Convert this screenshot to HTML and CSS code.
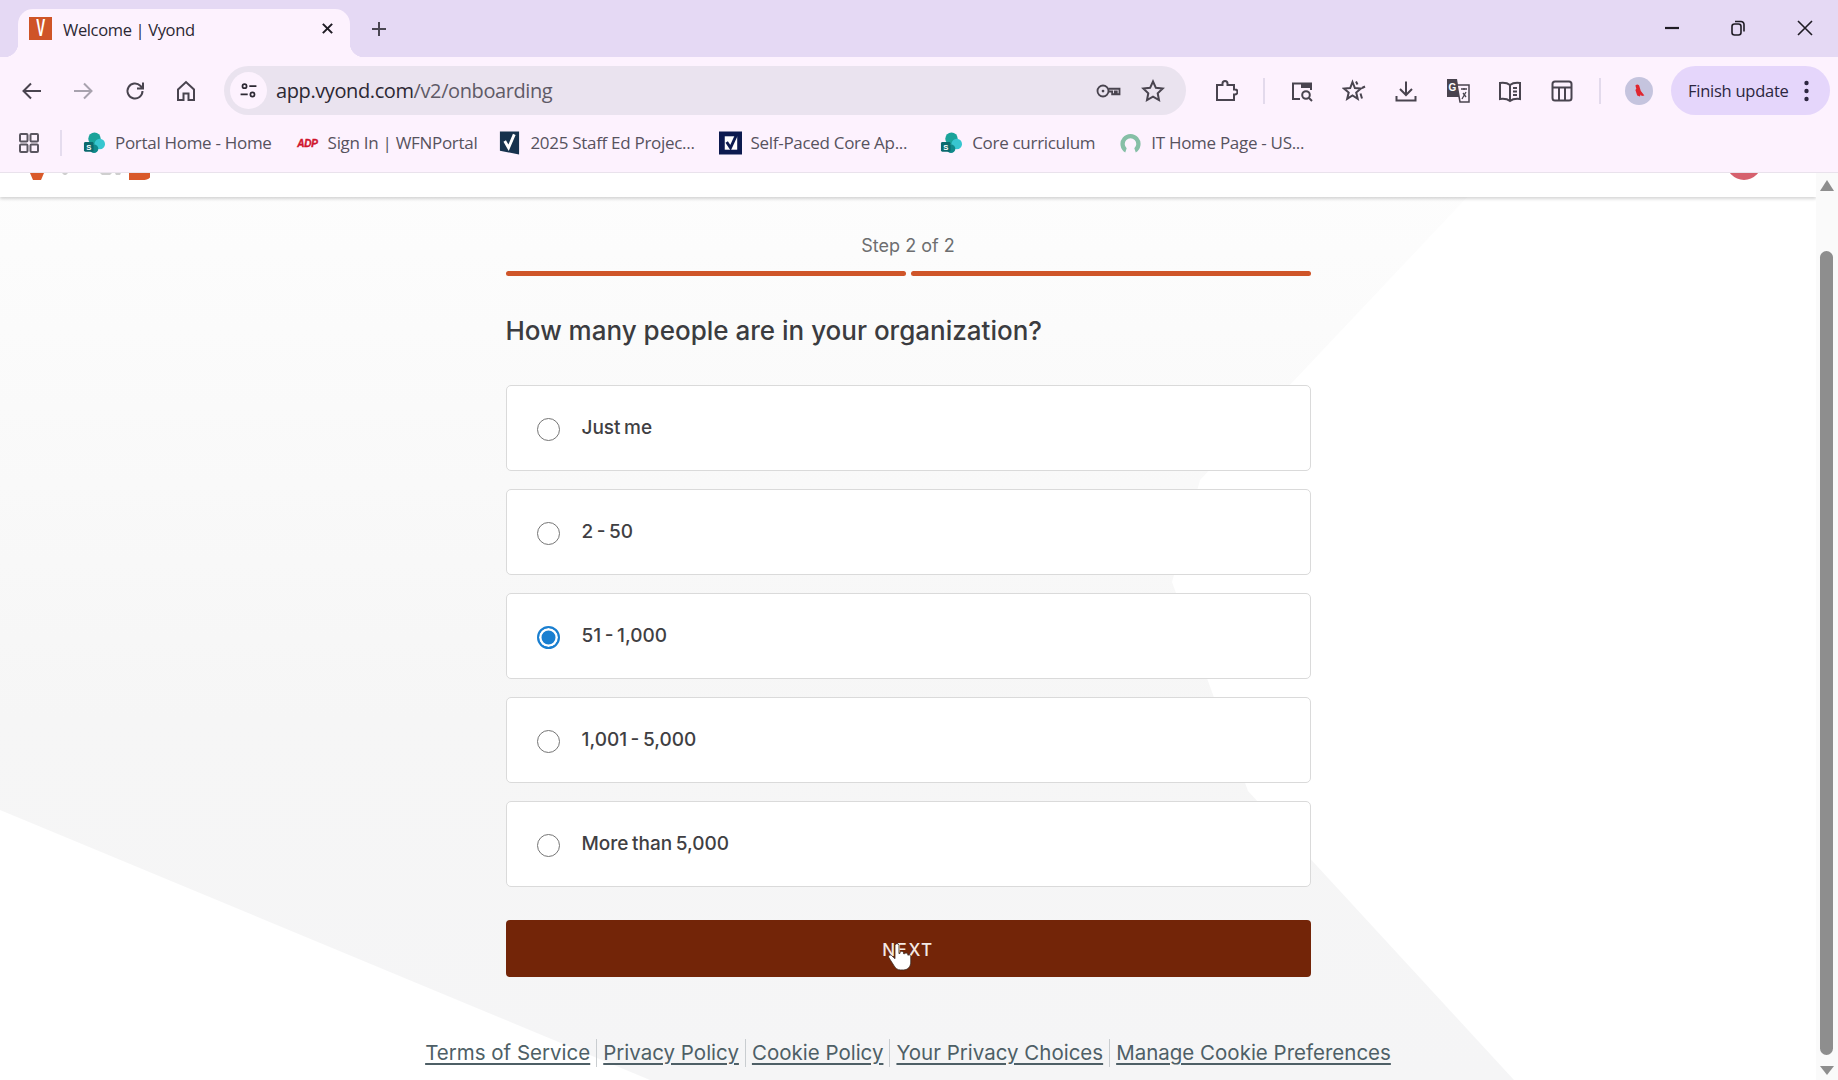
FILE: index.html
```html
<!DOCTYPE html>
<html lang="en">
<head>
<meta charset="utf-8">
<title>Welcome | Vyond</title>
<link rel="stylesheet" href="styles.css">
</head>
<body>
<div class="tabstrip">
  <div class="tab">
    <span class="favicon"><span class="favicon-v">V</span></span>
    <span class="tab-title">Welcome | Vyond</span>
    <svg class="tab-close" viewBox="0 0 14 14"><path d="M2 2l10 10M12 2L2 12"/></svg>
  </div>
  <svg class="newtab" viewBox="0 0 16 16"><path d="M8 1v14M1 8h14"/></svg>
  <div class="winctl">
    <div class="winbtn"><svg class="min" viewBox="0 0 16 16"><path d="M1 8h14"/></svg></div>
    <div class="winbtn"><svg viewBox="0 0 16 16"><rect x="2" y="4" width="9" height="11" rx="2.5"/><path d="M5 1.500h6a3 3 0 0 1 3 3v7"/></svg></div>
    <div class="winbtn"><svg viewBox="0 0 16 16"><path d="M1 1l14 14M15 1L1 15"/></svg></div>
  </div>
</div>

<div class="toolbar">
  <div class="navbtn nav"><svg viewBox="0 0 24 24"><path d="M21 12H4M11 4.500L3.500 12l7.500 7.500"/></svg></div>
  <div class="navbtn nav dim"><svg viewBox="0 0 24 24"><path d="M3 12h17M13 4.500l7.500 7.500-7.500 7.500"/></svg></div>
  <div class="navbtn nav"><svg viewBox="0 0 24 24"><path d="M19.500 12a7.500 7.500 0 1 1-2.200-5.300L20 9.500M20 3.500v6h-6"/></svg></div>
  <div class="navbtn nav"><svg viewBox="0 0 24 24"><path d="M4 10.500L12 3l8 7.500V21h-5.500v-6.500h-5V21H4z"/></svg></div>
  <div class="omnibox">
    <span class="site-icon"><svg viewBox="0 0 24 24"><circle cx="7" cy="6.500" r="2.600"/><path d="M13 6.500h9M2 17h9"/><circle cx="17" cy="17" r="2.600"/></svg></span>
    <span class="url">app.vyond.com<span class="url-path">/v2/onboarding</span></span>
    <svg class="omni-icon key" viewBox="0 0 28 24"><circle cx="8" cy="12" r="6"/><circle cx="8" cy="12" r="1.500" class="solid"/><path d="M14 9.500h12v6h-3v-3h-2v3h-3v-3h-4"/></svg>
    <svg class="omni-icon star" viewBox="0 0 24 24"><path d="M12 2.500l2.900 6.300 6.800.8-5 4.700 1.300 6.800-6-3.400-6 3.400 1.300-6.800-5-4.700 6.800-.8z"/></svg>
  </div>
  <div class="navbtn ext"><svg viewBox="0 0 24 24"><path d="M3 6h5.500V4.500a2.500 2.500 0 0 1 5 0V6H20v4.500h1a2.500 2.500 0 0 1 0 5h-1V21H3z"/></svg></div>
  <span class="tb-sep first"></span>
  <div class="navbtn"><svg viewBox="0 0 24 24"><path d="M10 20H3V4.500h18V11"/><path class="solid" d="M11 4h10v5H11z"/><circle cx="16" cy="16" r="3.800"/><path d="M19 19l3 3"/></svg></div>
  <div class="navbtn"><svg viewBox="0 0 24 24"><path d="M10.500 3l2.400 6 6 .6-4.700 4 1.500 6.200-5.200-3.400-5.300 3.400 1.500-6.200-4.700-4 6.200-.6z"/><path d="M14 2.500l1.500 3M20 9l3-1.500M18.500 14.500l1.500 5"/></svg></div>
  <div class="navbtn"><svg viewBox="0 0 24 24"><path d="M12 2.500v13M6 10l6 6 6-6M2.500 17v4.500h19V17"/></svg></div>
  <div class="navbtn"><svg viewBox="0 0 24 24"><path class="solid" d="M1 0h10l3 18H1z"/><text x="6.500" y="12" class="gt">G</text><path class="paper" d="M11 6h12v17H14z"/><path class="thin" d="M15 10h6M18 9v2M16 20l4-7M20 18l-3-4"/></svg></div>
  <div class="navbtn"><svg viewBox="0 0 24 24"><path d="M12 6C9.500 4 6 3.500 2 4v16c4-.5 7.500 0 10 2 2.500-2 6-2.500 10-2V4c-4-.5-7.500 0-10 2zM12 6v16M15 9h4M15 12.500h4M15 16h4"/></svg></div>
  <div class="navbtn"><svg viewBox="0 0 24 24"><rect x="2.500" y="2.500" width="19" height="19" rx="2.500"/><path d="M2.500 8.500h19M9 8.500v13M15 8.500v13"/></svg></div>
  <span class="tb-sep second"></span>
  <span class="avatar"><svg viewBox="0 0 20 20"><path d="M6 4c2-2 4-1 4.500 1l1.500 5 4 5-3 .5-1-1.500-1 2-3-1-2-6 1-1.500z"/></svg></span>
  <div class="update-pill">
    <span class="update-text">Finish update</span>
    <svg class="kebab" viewBox="0 0 6 22"><circle cx="3" cy="3" r="2.200"/><circle cx="3" cy="11" r="2.200"/><circle cx="3" cy="19" r="2.200"/></svg>
  </div>
</div>

<div class="bookmarks">
  <svg class="apps" viewBox="0 0 20 20"><rect x="1" y="1" width="7.500" height="7.500" rx="1"/><rect x="11.500" y="1" width="7.500" height="7.500" rx="1"/><rect x="1" y="11.500" width="7.500" height="7.500" rx="1"/><rect x="11.500" y="11.500" width="7.500" height="7.500" rx="1"/></svg>
  <span class="bm-sep"></span>
  <div class="bm">
    <svg class="bm-icon" viewBox="0 0 24 24"><circle cx="12" cy="7.500" r="6.500" fill="#1aa39a"/><circle cx="17.500" cy="13" r="5.500" fill="#37c6d0"/><circle cx="11.500" cy="18" r="4.500" fill="#0f8a8a"/><rect x="1" y="11" width="10" height="10" rx="1.500" fill="#0b6a6e"/><text x="6" y="19" class="bm-s">S</text></svg>
    <span>Portal Home - Home</span>
  </div>
  <div class="bm tight">
    <svg class="bm-icon" viewBox="0 0 24 24"><text x="12" y="16.500" class="bm-adp">ADP</text></svg>
    <span>Sign In | WFNPortal</span>
  </div>
  <div class="bm">
    <svg class="bm-icon" viewBox="0 0 24 24"><path d="M2 0h20v24L2 20z" fill="#16324d"/><path d="M7 10l4 7 6-14" class="bm-check"/></svg>
    <span>2025 Staff Ed Projec...</span>
  </div>
  <div class="bm wide">
    <svg class="bm-icon" viewBox="0 0 24 24"><rect width="24" height="24" fill="#0c1a4f"/><path d="M6 5h13v14H6z" fill="#fff"/><path d="M8 11l4 6 6-13" class="bm-check navy"/></svg>
    <span>Self-Paced Core Ap...</span>
  </div>
  <div class="bm">
    <svg class="bm-icon" viewBox="0 0 24 24"><circle cx="12" cy="7.500" r="6.500" fill="#1aa39a"/><circle cx="17.500" cy="13" r="5.500" fill="#37c6d0"/><circle cx="11.500" cy="18" r="4.500" fill="#0f8a8a"/><rect x="1" y="11" width="10" height="10" rx="1.500" fill="#0b6a6e"/><text x="6" y="19" class="bm-s">S</text></svg>
    <span>Core curriculum</span>
  </div>
  <div class="bm">
    <svg class="bm-icon" viewBox="0 0 24 24"><path d="M6.500 22a10.500 10.500 0 1 1 11 0l-1.500-4.500a6 6 0 1 0-8 0z" fill="#86bfa6"/></svg>
    <span>IT Home Page - US...</span>
  </div>
</div>

<div class="viewport">
  <main class="page">
    <svg class="page-bg" viewBox="0 0 1816 907" preserveAspectRatio="none">
      <defs><linearGradient id="shade" x1="0" y1="0" x2="0" y2="1"><stop offset="0" stop-color="#fdfdfd"/><stop offset=".6" stop-color="#f6f6f6"/><stop offset="1" stop-color="#f5f5f6"/></linearGradient></defs>
      <polygon points="0,0 1490,0 1200,307 1172,409 1248,618 1514,907 650,907 0,637" fill="url(#shade)"/>
    </svg>
    <header class="app-header">
      <svg class="logo-frag" viewBox="0 0 150 7"><path d="M30 0h14l-3 7h-8z"/><path d="M129 0h23q-1 7-10 7h-13z"/><path class="frag-grey" d="M62 0h6l-2 2h-2zM100 0h12l-2 2h-8zM115 0h6l-1 2h-4z"/></svg>
      <span class="user-frag"></span>
    </header>
    <div class="onboarding">
      <div class="step">Step 2 of 2</div>
      <div class="progress"><span></span><span></span></div>
      <h1 class="question">How many people are in your organization?</h1>
      <div class="options">
        <label class="option"><span class="radio"></span><span class="opt-text">Just me</span></label>
        <label class="option"><span class="radio"></span><span class="opt-text">2 - 50</span></label>
        <label class="option"><span class="radio on"></span><span class="opt-text">51 - 1,000</span></label>
        <label class="option"><span class="radio"></span><span class="opt-text">1,001 - 5,000</span></label>
        <label class="option"><span class="radio"></span><span class="opt-text">More than 5,000</span></label>
      </div>
      <button class="next">NEXT
        <svg class="hand" viewBox="0 0 24 26"><path d="M8 2.500a1.800 1.800 0 0 1 3.500 0V10l1-.3V9a1.600 1.600 0 0 1 3 0v1l1 .2a1.500 1.500 0 0 1 2.800.5l.2.800a1.500 1.500 0 0 1 2.500 1v5c0 4-2.500 7-6.500 7H13c-3 0-4.500-1.500-6-4l-4.500-7c-1-1.800 1.500-3.200 2.800-1.500L8 14.500z"/></svg>
      </button>
      <nav class="legal">
        <a href="#">Terms of Service</a><a href="#">Privacy Policy</a><a href="#">Cookie Policy</a><a href="#">Your Privacy Choices</a><a href="#">Manage Cookie Preferences</a>
      </nav>
    </div>
  </main>
  <aside class="scrollbar">
    <span class="arrow up"></span>
    <span class="thumb"></span>
    <span class="arrow down"></span>
  </aside>
</div>
</body>
</html>
```
FILE: styles.css
```css
* { box-sizing: border-box; }
html, body { margin: 0; height: 100%; overflow: hidden; }
body { width: 1838px; height: 1080px; display: flex; flex-direction: column; background: #fff; font-family: "Inter", "Liberation Sans", sans-serif; }
svg { display: block; }

/* Tab strip */
.tabstrip { height: 57px; flex: none; background: #e5d9f4; display: flex; align-items: flex-start; padding-left: 18px; }
.tab { position: relative; width: 332px; height: 48px; margin-top: 9px; background: #fdf2fe; border-radius: 15px 15px 0 0; display: flex; align-items: flex-start; padding: 8px 0 0 11px; }
.tab::before, .tab::after { content: ""; position: absolute; bottom: 0; width: 14px; height: 14px; }
.tab::before { left: -14px; background: radial-gradient(circle at 0 0, transparent 14px, #fdf2fe 14.500px); }
.tab::after { right: -14px; background: radial-gradient(circle at 100% 0, transparent 14px, #fdf2fe 14.500px); }
.favicon { width: 23px; height: 23px; background: #cf5427; display: flex; justify-content: center; flex: none; }
.favicon-v { display: block; color: #fff; font: 700 23px/23px "Liberation Sans", sans-serif; transform: scaleX(.58); }
.tab-title { margin: 3px 0 0 11px; font: 400 16.500px/20px "Open Sans", sans-serif; color: #2c2833; letter-spacing: -.35px; }
.tab-close { position: absolute; left: 303px; top: 13px; width: 13px; height: 13px; fill: none; stroke: #1f1c24; stroke-width: 2.200; }
.newtab { width: 16px; height: 16px; margin: 21px 0 0 21px; fill: none; stroke: #4a4652; stroke-width: 2; }
.winctl { margin-left: auto; display: flex; }
.winbtn { width: 66.500px; height: 57px; display: flex; align-items: center; justify-content: center; }
.winbtn svg { width: 16px; height: 16px; margin-top: -1px; fill: none; stroke: #1f1c24; stroke-width: 1.600; }
.winbtn svg.min { stroke-width: 2.200; }

/* Toolbar */
.toolbar { height: 67px; flex: none; background: #fdf2fe; display: flex; align-items: center; padding-left: 6px; }
.navbtn { width: 52px; height: 40px; flex: none; display: flex; align-items: center; justify-content: center; }
.navbtn.nav { width: 51.500px; }
.navbtn svg { width: 24px; height: 24px; fill: none; stroke: #49444f; stroke-width: 2; }
.navbtn.dim svg { stroke: #a8a2ae; }
.navbtn .solid { fill: #49444f; stroke: none; }
.navbtn .paper { fill: #fdf2fe; stroke: #49444f; stroke-width: 1.500; }
.navbtn .thin { stroke-width: 1.300; }
.gt { font: 700 10px "Liberation Sans", sans-serif; fill: #fff; stroke: none; text-anchor: middle; }
.omnibox { width: 962px; height: 49px; margin-left: 12px; border-radius: 25px; background: #eae3ef; display: flex; align-items: center; padding-left: 6px; flex: none; }
.site-icon { width: 37px; height: 37px; border-radius: 50%; background: #fdf2fe; display: flex; align-items: center; justify-content: center; flex: none; }
.site-icon svg { width: 19px; height: 19px; fill: none; stroke: #2c2833; stroke-width: 2.200; }
.url { margin-left: 9px; font: 400 20px/24px "Open Sans", sans-serif; letter-spacing: -.4px; color: #2c2833; }
.url-path { color: #5f5a66; }
.omni-icon { fill: none; stroke: #49444f; stroke-width: 2; flex: none; }
.key { width: 27px; height: 22px; margin-left: auto; }
.key .solid { fill: #49444f; stroke: none; }
.star { width: 24px; height: 24px; margin: 0 21px 0 19px; }
.ext { margin-left: 14px; }
.tb-sep { width: 2px; height: 26px; background: #e3daec; flex: none; }
.tb-sep.first { margin: 0 11px; }
.tb-sep.second { margin-left: 11px; }
.avatar { width: 28px; height: 28px; margin-left: 24px; border-radius: 50%; background: #c5c4de; display: flex; align-items: center; justify-content: center; flex: none; }
.avatar svg { width: 18px; height: 18px; fill: #e0262f; }
.update-pill { width: 159px; height: 49px; margin-left: 18px; border-radius: 25px; background: #e5d6fb; display: flex; align-items: center; padding-left: 17px; flex: none; }
.update-text { font: 400 16.500px/20px "Open Sans", sans-serif; letter-spacing: -.25px; color: #2c2640; white-space: nowrap; }
.kebab { width: 7px; height: 22px; margin-left: auto; margin-right: 20px; fill: #2c2640; }

/* Bookmarks */
.bookmarks { height: 49px; flex: none; background: #fdf2fe; border-bottom: 1px solid #e9e2ec; display: flex; align-items: center; padding: 0 0 10px 19px; }
.apps { width: 20px; height: 20px; fill: none; stroke: #5a5660; stroke-width: 2; flex: none; }
.bm-sep { width: 2px; height: 26px; margin: 0 21px; background: #e5dcee; flex: none; }
.bm { display: flex; align-items: center; gap: 9px; margin-right: 24px; font: 400 17px/20px "Open Sans", sans-serif; letter-spacing: -.3px; color: #57525e; white-space: nowrap; }
.bm.tight { margin-right: 21px; }
.bm.wide { margin-right: 33px; }
.bm-icon { width: 23px; height: 24px; flex: none; }
.bm-s { font: 700 8px "Liberation Sans", sans-serif; fill: #fff; text-anchor: middle; }
.bm-adp { font: italic 700 10.500px "Liberation Sans", sans-serif; fill: #d0142c; stroke: #d0142c; stroke-width: .4; text-anchor: middle; }
.bm-check { fill: none; stroke: #fff; stroke-width: 3; }
.bm-check.navy { stroke: #0c1a4f; }

/* Page */
.viewport { flex: 1; min-height: 0; display: flex; }
.page { position: relative; width: 1816px; flex: none; overflow: hidden; background: #fff; }
.page-bg { position: absolute; inset: 0; width: 100%; height: 100%; }
.app-header { position: relative; height: 24px; background: #fff; box-shadow: 0 2px 3px rgba(0, 0, 0, .16); }
.logo-frag { position: absolute; left: 0; top: 0; width: 150px; height: 7px; fill: #d9592a; }
.logo-frag .frag-grey { fill: #cfcfcf; }
.user-frag { position: absolute; left: 1726px; top: -30px; width: 36px; height: 37px; border-radius: 50%; background: #d6616e; }
.onboarding { position: relative; width: 805px; margin: 0 auto; }
.step { height: 33px; margin-top: 32px; text-align: center; font-size: 18px; line-height: 33px; color: #6d6e70; }
.progress { display: flex; gap: 5px; margin-top: 9px; }
.progress span { flex: 1; height: 5px; border-radius: 3px; background: #cf5529; }
.question { margin: 37px 0 36px; font-size: 26px; line-height: 36px; font-weight: 500; color: #3b3c40; }
.options { display: flex; flex-direction: column; gap: 18px; }
.option { height: 86px; background: #fff; border: 1px solid #dadada; border-radius: 5px; display: flex; align-items: center; padding-left: 30px; }
.radio { width: 23px; height: 23px; border-radius: 50%; border: 1.500px solid #757575; background: #fff; margin-top: 2px; flex: none; }
.radio.on { border: 2px solid #1a7fd0; box-shadow: inset 0 0 0 2.500px #fff; background: #1a7fd0; }
.opt-text { margin-left: 22px; margin-top: -1px; font-size: 19px; line-height: 24px; font-weight: 500; word-spacing: -1.500px; color: #3f4043; }
.next { position: relative; display: block; width: 100%; height: 57px; margin-top: 33px; border: 0; border-radius: 4px; background: #732508; color: #f4e9e4; font: 500 17px/24px "Inter", sans-serif; letter-spacing: 1.500px; text-align: center; padding: 3px 0 0; }
.hand { position: absolute; left: 380px; top: 22px; width: 27px; height: 30px; fill: #fff; stroke: #3a2a22; stroke-width: .7; }
.legal { display: flex; justify-content: center; margin: 62px 0 0 -98px; width: 1001px; }
.legal a { font-size: 20.500px; line-height: 28px; color: #4e5f66; text-decoration: underline; text-underline-offset: 3px; white-space: nowrap; padding: 0 6px; border-left: 1px solid #c9cdd0; }
.legal a:first-child { border-left: 0; }

/* Scrollbar */
.scrollbar { width: 22px; flex: none; background: #fafafa; display: flex; flex-direction: column; align-items: center; padding: 7px 1px 5px 0; }
.thumb { flex: 1; width: 13px; margin: 60px 0 11px; border-radius: 7px; background: #8e8e8e; }
.arrow { width: 0; height: 0; border-left: 7px solid transparent; border-right: 7px solid transparent; flex: none; }
.arrow.up { border-bottom: 11px solid #8e8e8e; }
.arrow.down { border-top: 9px solid #8e8e8e; }
```
